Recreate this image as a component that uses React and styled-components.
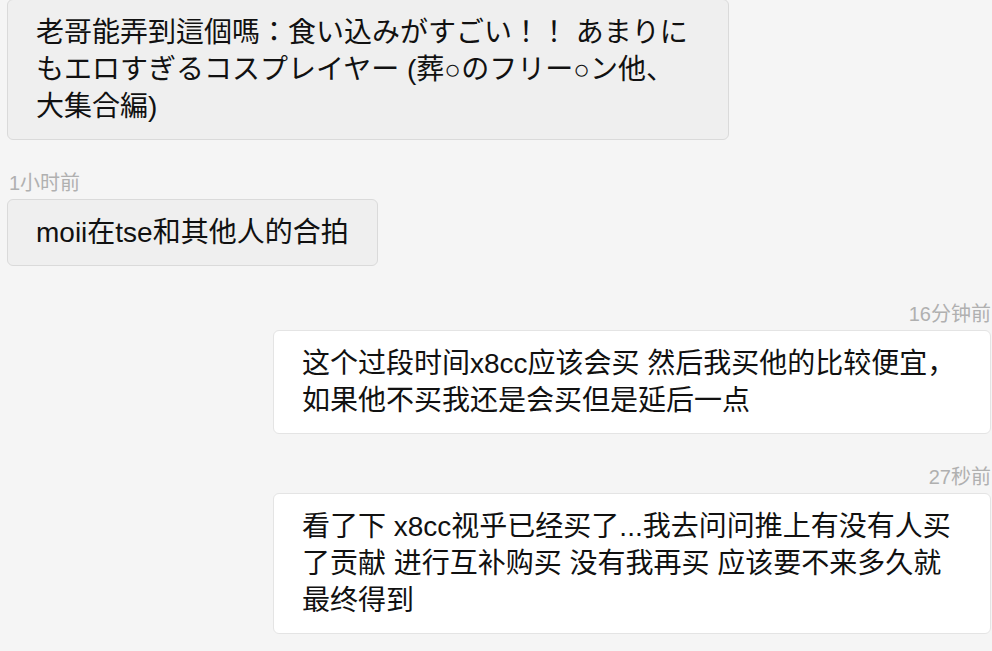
import React from 'react';
import styled, { createGlobalStyle } from 'styled-components';

const GlobalStyle = createGlobalStyle`
  html, body {
    margin: 0;
    padding: 0;
    background: #f5f5f5;
    overflow: hidden;
  }
  body {
    font-family: 'Liberation Sans', 'Noto Sans CJK SC', sans-serif;
  }
`;

const Thread = styled.div`
  display: flex;
  flex-direction: column;
  padding: 0 1px 0 7px;
  margin-top: -1px;
`;

const Message = styled.div`
  display: flex;
  flex-direction: column;
  align-items: ${(p) => (p.$mine ? 'flex-end' : 'flex-start')};
  margin-top: ${(p) => p.$gap}px;
`;

const Stamp = styled.div`
  font-size: 20px;
  line-height: 24px;
  color: #b0b0b0;
  margin-bottom: 4px;
  padding-left: 2px;
`;

const Bubble = styled.div`
  box-sizing: border-box;
  max-width: ${(p) => (p.$mine ? 718 : 722)}px;
  padding: 14px 28px;
  font-size: 28px;
  line-height: 37px;
  color: #111;
  background: ${(p) => (p.$mine ? '#ffffff' : '#efefef')};
  border: 1px solid ${(p) => (p.$mine ? '#e4e4e4' : '#dadada')};
  border-radius: 6px;
  font-family: ${(p) =>
    p.$lang === 'ja'
      ? "'Liberation Sans', 'Noto Sans CJK JP', sans-serif"
      : "'Liberation Sans', 'Noto Sans CJK SC', sans-serif"};
`;

const messages = [
  {
    mine: false,
    lang: 'ja',
    text: '老哥能弄到這個嗎：食い込みがすごい！！ あまりにもエロすぎるコスプレイヤー (葬○のフリー○ン他、大集合編)',
  },
  { mine: false, time: '1小时前', text: 'moii在tse和其他人的合拍' },
  {
    mine: true,
    time: '16分钟前',
    text: '这个过段时间x8cc应该会买 然后我买他的比较便宜，如果他不买我还是会买但是延后一点',
  },
  {
    mine: true,
    time: '27秒前',
    text: '看了下 x8cc视乎已经买了...我去问问推上有没有人买了贡献 进行互补购买 没有我再买 应该要不来多久就最终得到',
  },
];

export default function App() {
  return (
    <>
      <GlobalStyle />
      <Thread>
        {messages.map((m, i) => {
          const prev = messages[i - 1];
          // a switch of sides leaves a little more room above the group
          const gap = !prev ? 0 : prev.mine !== m.mine ? 36 : 31;
          return (
            <Message key={i} $mine={m.mine} $gap={gap}>
              {m.time && <Stamp>{m.time}</Stamp>}
              <Bubble $mine={m.mine} $lang={m.lang} lang={m.lang === 'ja' ? 'ja' : 'zh-CN'}>
                {m.text}
              </Bubble>
            </Message>
          );
        })}
      </Thread>
    </>
  );
}
